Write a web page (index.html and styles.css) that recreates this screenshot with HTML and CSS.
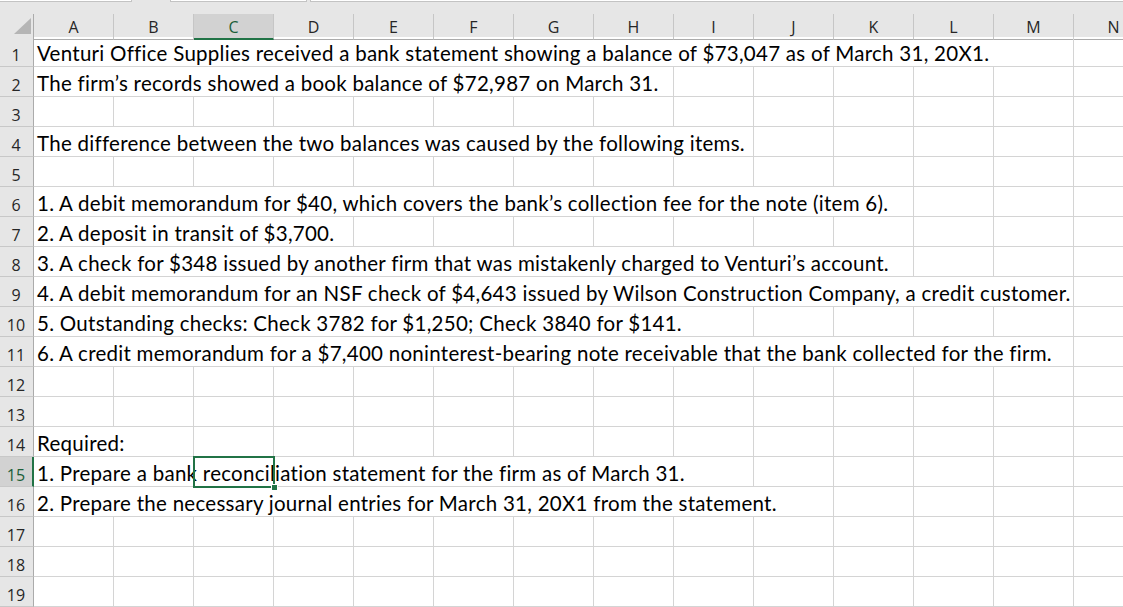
FILE: index.html
```html
<!DOCTYPE html>
<html>
<head>
<meta charset="utf-8">
<link rel="stylesheet" href="styles.css">
</head>
<body>
<div class="sheet">
  <div class="fbar">
    <div class="fbox fbox-name"></div>
    <div class="fbox fbox-mid"></div>
    <div class="fbox fbox-formula"></div>
  </div>
  <div class="row head">
    <div class="corner"><div class="tri"></div></div>
    <div class="ch">A</div><div class="ch">B</div><div class="ch sel">C</div><div class="ch">D</div><div class="ch">E</div><div class="ch">F</div><div class="ch">G</div><div class="ch">H</div><div class="ch">I</div><div class="ch">J</div><div class="ch">K</div><div class="ch">L</div><div class="ch">M</div><div class="ch">N</div>
  </div>

  <div class="row"><div class="rh">1</div><div class="c t s13">Venturi Office Supplies received a bank statement showing a balance of $73,047 as of March 31, 20X1.</div><div class="c"></div></div>
  <div class="row"><div class="rh">2</div><div class="c t s8">The firm’s records showed a book balance of $72,987 on March 31.</div><div class="c"></div><div class="c"></div><div class="c"></div><div class="c"></div><div class="c"></div><div class="c"></div></div>
  <div class="row"><div class="rh">3</div><div class="c"></div><div class="c"></div><div class="c"></div><div class="c"></div><div class="c"></div><div class="c"></div><div class="c"></div><div class="c"></div><div class="c"></div><div class="c"></div><div class="c"></div><div class="c"></div><div class="c"></div><div class="c"></div></div>
  <div class="row"><div class="rh">4</div><div class="c t s9">The difference between the two balances was caused by the following items.</div><div class="c"></div><div class="c"></div><div class="c"></div><div class="c"></div><div class="c"></div></div>
  <div class="row"><div class="rh">5</div><div class="c"></div><div class="c"></div><div class="c"></div><div class="c"></div><div class="c"></div><div class="c"></div><div class="c"></div><div class="c"></div><div class="c"></div><div class="c"></div><div class="c"></div><div class="c"></div><div class="c"></div><div class="c"></div></div>
  <div class="row"><div class="rh">6</div><div class="c t s11">1. A debit memorandum for $40, which covers the bank’s collection fee for the note (item 6).</div><div class="c"></div><div class="c"></div><div class="c"></div></div>
  <div class="row"><div class="rh">7</div><div class="c t s4">2. A deposit in transit of $3,700.</div><div class="c"></div><div class="c"></div><div class="c"></div><div class="c"></div><div class="c"></div><div class="c"></div><div class="c"></div><div class="c"></div><div class="c"></div><div class="c"></div></div>
  <div class="row"><div class="rh">8</div><div class="c t s11">3. A check for $348 issued by another firm that was mistakenly charged to Venturi’s account.</div><div class="c"></div><div class="c"></div><div class="c"></div></div>
  <div class="row"><div class="rh">9</div><div class="c t s13">4. A debit memorandum for an NSF check of $4,643 issued by Wilson Construction Company, a credit customer.</div><div class="c"></div></div>
  <div class="row"><div class="rh">10</div><div class="c t s9">5. Outstanding checks: Check 3782 for $1,250; Check 3840 for $141.</div><div class="c"></div><div class="c"></div><div class="c"></div><div class="c"></div><div class="c"></div></div>
  <div class="row"><div class="rh">11</div><div class="c t s13">6. A credit memorandum for a $7,400 noninterest-bearing note receivable that the bank collected for the firm.</div><div class="c"></div></div>
  <div class="row"><div class="rh">12</div><div class="c"></div><div class="c"></div><div class="c"></div><div class="c"></div><div class="c"></div><div class="c"></div><div class="c"></div><div class="c"></div><div class="c"></div><div class="c"></div><div class="c"></div><div class="c"></div><div class="c"></div><div class="c"></div></div>
  <div class="row"><div class="rh">13</div><div class="c"></div><div class="c"></div><div class="c"></div><div class="c"></div><div class="c"></div><div class="c"></div><div class="c"></div><div class="c"></div><div class="c"></div><div class="c"></div><div class="c"></div><div class="c"></div><div class="c"></div><div class="c"></div></div>
  <div class="row"><div class="rh">14</div><div class="c t s2">Required:</div><div class="c"></div><div class="c"></div><div class="c"></div><div class="c"></div><div class="c"></div><div class="c"></div><div class="c"></div><div class="c"></div><div class="c"></div><div class="c"></div><div class="c"></div><div class="c"></div></div>
  <div class="row active"><div class="rh sel">15</div><div class="c t s9">1. Prepare a bank reconciliation statement for the firm as of March 31.</div><div class="c"></div><div class="c"></div><div class="c"></div><div class="c"></div><div class="c"></div><div class="selbox"><div class="handle"></div></div></div>
  <div class="row"><div class="rh">16</div><div class="c t s10">2. Prepare the necessary journal entries for March 31, 20X1 from the statement.</div><div class="c"></div><div class="c"></div><div class="c"></div><div class="c"></div></div>
  <div class="row"><div class="rh">17</div><div class="c"></div><div class="c"></div><div class="c"></div><div class="c"></div><div class="c"></div><div class="c"></div><div class="c"></div><div class="c"></div><div class="c"></div><div class="c"></div><div class="c"></div><div class="c"></div><div class="c"></div><div class="c"></div></div>
  <div class="row"><div class="rh">18</div><div class="c"></div><div class="c"></div><div class="c"></div><div class="c"></div><div class="c"></div><div class="c"></div><div class="c"></div><div class="c"></div><div class="c"></div><div class="c"></div><div class="c"></div><div class="c"></div><div class="c"></div><div class="c"></div></div>
  <div class="row"><div class="rh">19</div><div class="c"></div><div class="c"></div><div class="c"></div><div class="c"></div><div class="c"></div><div class="c"></div><div class="c"></div><div class="c"></div><div class="c"></div><div class="c"></div><div class="c"></div><div class="c"></div><div class="c"></div><div class="c"></div></div>
</div>
</body>
</html>
```

FILE: styles.css
```css
html, body {
  margin: 0;
  padding: 0;
  background: #ffffff;
}
.sheet {
  width: 1123px;
  height: 607px;
  overflow: hidden;
  background: #ffffff;
}
.fbar {
  height: 14px;
  background: #e6e6e6;
  position: relative;
  display: flex;
  align-items: flex-start;
}
.fbox {
  height: 1px;
  background: #ffffff;
  border: 1px solid #c3c3c3;
  border-top: none;
  box-sizing: content-box;
}
.fbox-name { width: 131px; margin-left: -1px; }
.fbox-mid { width: 135px; margin-left: 38px; }
.fbox-formula { flex: 1; margin-left: 3px; margin-right: -2px; }

.row {
  display: grid;
  grid-template-columns: 34px repeat(14, 80px);
  height: 30px;
  position: relative;
}
.row.head {
  height: 23px;
  background: #e6e6e6;
}
.corner {
  border-right: 1px solid #ababab;
  border-bottom: 1px solid #ababab;
  box-sizing: border-box;
  position: relative;
}
.tri {
  position: absolute;
  left: 14px;
  top: 4px;
  width: 0;
  height: 0;
  border-left: 17px solid transparent;
  border-bottom: 16px solid #b5b5b5;
}
.ch {
  box-sizing: border-box;
  border-right: 1px solid #c6c6c6;
  border-bottom: 1px solid #ababab;
  font-family: "Open Sans", "Noto Sans", sans-serif;
  font-size: 16px;
  color: #262626;
  display: flex;
  align-items: center;
  justify-content: center;
  padding-top: 1px;
}
.ch.sel {
  background: #d2d2d2;
  border-bottom: 2px solid #217346;
  color: #1b5e38;
  padding-top: 2px;
}
.rh {
  box-sizing: border-box;
  background: #e6e6e6;
  border-right: 1px solid #ababab;
  border-bottom: 1px solid #c8c8c8;
  font-family: "Open Sans", "Noto Sans", sans-serif;
  font-size: 16px;
  line-height: 20px;
  color: #262626;
  display: flex;
  align-items: flex-end;
  justify-content: center;
  padding-bottom: 1px;
  padding-right: 1px;
}
.rh.sel {
  background: #d2d2d2;
  border-right: 2px solid #217346;
  color: #1b5e38;
  padding-right: 0;
}
.c {
  box-sizing: border-box;
  border-right: 1px solid #d4d4d4;
  border-bottom: 1px solid #d4d4d4;
}
.t {
  font-family: "Lato", "Liberation Sans", sans-serif;
  font-size: 20.5px;
  letter-spacing: 0.27px;
  font-variant-ligatures: none;
  line-height: 23px;
  color: #000000;
  white-space: nowrap;
  display: flex;
  align-items: flex-end;
  padding-left: 3px;
  padding-bottom: 1px;
  overflow: visible;
}
.s2 { grid-column: span 2; }
.s4 { grid-column: span 4; }
.s8 { grid-column: span 8; }
.s9 { grid-column: span 9; }
.s10 { grid-column: span 10; }
.s11 { grid-column: span 11; }
.s13 { grid-column: span 13; }

.selbox {
  position: absolute;
  left: 193px;
  top: -1px;
  width: 82px;
  height: 32px;
  box-sizing: border-box;
  border: 2px solid #217346;
  pointer-events: none;
}
.handle {
  position: absolute;
  right: -5px;
  bottom: -5px;
  width: 5px;
  height: 5px;
  background: #217346;
  border: 1px solid #ffffff;
}
```
